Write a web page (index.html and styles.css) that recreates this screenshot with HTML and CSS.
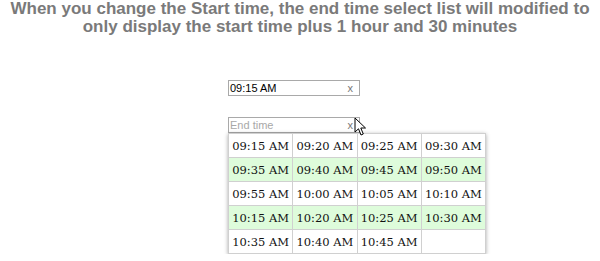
FILE: index.html
```html
<!DOCTYPE html>
<html lang="en">
<head>
  <meta charset="UTF-8" />
  <title>Time picker demo</title>
  <link rel="stylesheet" href="styles.css">
</head>
<body>

<!-- HEADER -->
<h1 class="intro">When you change the Start time, the end time select list will modified to only display the start time plus 1 hour and 30 minutes</h1>

<!-- PICKERS -->
<div class="pickers">
  <div class="time-field">
    <span class="value">09:15 AM</span>
    <span class="clear">x</span>
  </div>

  <div class="end-wrap">
    <div class="time-field">
      <span class="placeholder">End time</span>
      <span class="clear">x</span>
    </div>

    <table class="time-list">
      <tr><td>09:15 AM</td><td>09:20 AM</td><td>09:25 AM</td><td>09:30 AM</td></tr>
      <tr class="alt"><td>09:35 AM</td><td>09:40 AM</td><td>09:45 AM</td><td>09:50 AM</td></tr>
      <tr><td>09:55 AM</td><td>10:00 AM</td><td>10:05 AM</td><td>10:10 AM</td></tr>
      <tr class="alt"><td>10:15 AM</td><td>10:20 AM</td><td>10:25 AM</td><td>10:30 AM</td></tr>
      <tr><td>10:35 AM</td><td>10:40 AM</td><td>10:45 AM</td><td></td></tr>
    </table>

    <!-- mouse cursor -->
    <svg class="cursor" width="14" height="20" viewBox="0 0 14 20">
      <path d="M1 1 L1 15 L4.5 11.8 L7 18 L9.3 17 L6.8 11 L11.5 11 Z" fill="#fff" stroke="#000" stroke-width="1" stroke-linejoin="round"/>
    </svg>
  </div>
</div>

</body>
</html>
```

FILE: styles.css
```css
body {
  margin: 0;
  font-family: 'Liberation Sans', Arial, sans-serif;
  background-color: #ffffff;
}

.intro {
  margin: 0;
  padding: 0 4px;
  font-size: 17px;
  line-height: 18px;
  font-weight: bold;
  color: #7a7a7a;
  text-align: center;
}

.pickers {
  margin: 44px 0 0 228px;
  width: 258px;
}

.time-field {
  width: 129px;
  height: 14px;
  border: 1px solid #a9a9a9;
  display: flex;
  align-items: center;
  justify-content: space-between;
  font-size: 11px;
  padding: 0 0 0 1px;
  box-sizing: content-box;
}

.time-field .value {
  color: #000;
}

.time-field .placeholder {
  color: #a8a8a8;
}

.time-field .clear {
  color: #777;
  font-size: 11px;
  margin-right: 6px;
}

.end-wrap {
  position: relative;
  margin-top: 21px;
}

.time-list {
  border-collapse: collapse;
  width: 258px;
  font-family: 'DejaVu Serif', Georgia, serif;
  font-size: 11.5px;
  color: #111;
  box-shadow: 0 1px 4px rgba(0, 0, 0, 0.35);
  border: 1px solid #aaa;
}

.time-list td {
  border: 1px solid #d0d0d0;
  height: 23px;
  padding: 0;
  width: 64px;
  text-align: center;
  white-space: nowrap;
}

.time-list tr.alt td {
  background-color: #defcdb;
}

.cursor {
  position: absolute;
  left: 126px;
  top: 0;
}
```
